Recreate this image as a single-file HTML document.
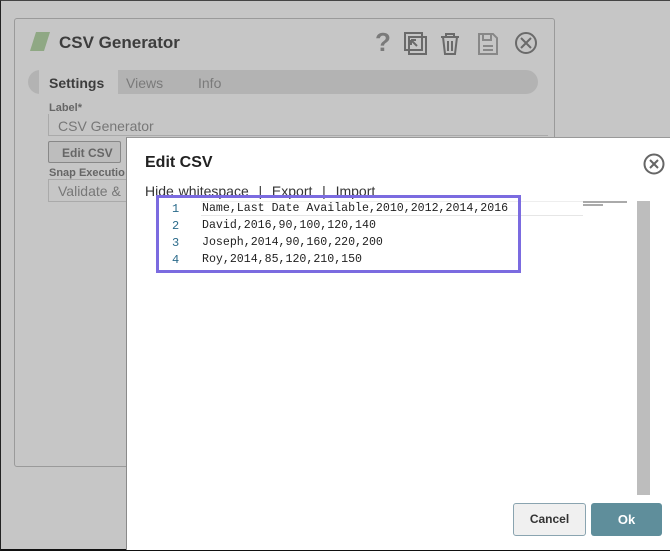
<!DOCTYPE html>
<html><head><style>
*{box-sizing:border-box;margin:0;padding:0}
body{width:670px;height:551px;background:#c6c6c6;position:relative;overflow:hidden;font-family:"Liberation Sans",sans-serif;border-left:1px solid #222;border-top:1px solid #444;border-bottom:2px solid #111}
.panel{position:absolute;left:13px;top:17px;width:541px;height:449px;border:1px solid #9a9a9a;border-radius:3px;background:#c6c6c6}
.t{position:absolute;color:#555}
.dlg{position:absolute;left:125px;top:136px;width:546px;height:413px;background:#fff;border-left:1px solid #8a8a8a;border-top:1px solid #999}
.mono{font-family:"Liberation Mono",monospace;font-size:11.6px;color:#222}
.ln{position:absolute;left:45px;color:#2a6a8a;font-family:"Liberation Mono",monospace;font-size:12px}
</style></head><body>
<div class="panel"></div>
<svg style="position:absolute;left:29px;top:31px" width="22" height="20"><polygon points="6,0 20,0 14,19 0,19" fill="#8fa884"/></svg>
<div class="t" style="left:58px;top:32px;font-size:17px;font-weight:bold;color:#3d3d3d">CSV Generator</div>
<div class="t" style="left:374px;top:26px;font-size:26px;font-weight:bold;color:#7a7a7a">?</div>
<svg style="position:absolute;left:402px;top:30px" width="140" height="26" fill="none" stroke="#6a6a6a" stroke-width="2">
<rect x="2" y="2" width="17" height="17"/><rect x="6" y="6" width="17" height="17"/><path d="M14 15 L8 9 M8 9h5 M8 9v5"/>
<path d="M38 6h18 M43 6v-3h8v3 M40 6l2 17h10l2-17 M45 10v10 M49 10v10"/>
<g stroke="#888"><path d="M76 3h14l4 4v16h-18z M80 3v6h8v-6 M80 15h10 M80 19h10"/></g>
<circle cx="123" cy="12" r="10"/><path d="M118 7l10 10 M128 7l-10 10"/>
</svg>
<div style="position:absolute;left:27px;top:69px;width:510px;height:24px;background:#b3b3b3;border-radius:12px"></div>
<div style="position:absolute;left:38px;top:69px;width:79px;height:24px;background:#c6c6c6"></div>
<div class="t" style="left:48px;top:74px;font-size:14px;font-weight:bold;color:#3d3d3d">Settings</div>
<div class="t" style="left:125px;top:74px;font-size:14px;color:#7a7a7a">Views</div>
<div class="t" style="left:197px;top:74px;font-size:14px;color:#7a7a7a">Info</div>
<div class="t" style="left:48px;top:101px;font-size:11px;font-weight:bold;color:#666">Label*</div>
<div style="position:absolute;left:47px;top:113px;width:500px;height:22px;border:1px solid #aaa;border-top:none;border-right:none"></div>
<div class="t" style="left:57px;top:117px;font-size:14px;color:#777">CSV Generator</div>
<div style="position:absolute;left:47px;top:140px;width:73px;height:22px;border:1px solid #888;background:#bdbdbd;border-radius:2px"></div>
<div class="t" style="left:61px;top:145px;font-size:12px;font-weight:bold;color:#666">Edit CSV</div>
<div class="t" style="left:48px;top:166px;font-size:11px;font-weight:bold;color:#666">Snap Executio</div>
<div style="position:absolute;left:47px;top:178px;width:80px;height:23px;border:1px solid #aaa;border-right:none"></div>
<div class="t" style="left:57px;top:182px;font-size:14px;color:#777">Validate &amp;</div>

<div class="dlg">
<div style="position:absolute;left:18px;top:16px;font-size:16px;font-weight:bold;color:#222">Edit CSV</div>
<svg style="position:absolute;left:516px;top:15px" width="22" height="22" fill="none" stroke="#666" stroke-width="2"><circle cx="11" cy="11" r="9.5"/><path d="M7 7l8 8 M15 7l-8 8"/></svg>
<div style="position:absolute;left:18px;top:45px;font-size:14px;color:#333;word-spacing:1px">Hide whitespace &nbsp;| &nbsp;Export &nbsp;| &nbsp;Import</div>
<div style="position:absolute;left:74px;top:63px;width:382px;height:15px;border-bottom:1px solid #e6e6e6;border-top:1px solid #eee;background:#fff"></div>
<div style="position:absolute;left:29px;top:57px;width:365px;height:78px;border:3px solid #7b6be0"></div>
<div class="ln" style="top:64px">1</div><div class="mono" style="position:absolute;left:75px;top:64px">Name,Last Date Available,2010,2012,2014,2016</div>
<div class="ln" style="top:81px">2</div><div class="mono" style="position:absolute;left:75px;top:81px">David,2016,90,100,120,140</div>
<div class="ln" style="top:98px">3</div><div class="mono" style="position:absolute;left:75px;top:98px">Joseph,2014,90,160,220,200</div>
<div class="ln" style="top:115px">4</div><div class="mono" style="position:absolute;left:75px;top:115px">Roy,2014,85,120,210,150</div>
<div style="position:absolute;left:456px;top:63px;width:44px;height:2px;background:#aaa"></div>
<div style="position:absolute;left:456px;top:66px;width:20px;height:2px;background:#aaa"></div>
<div style="position:absolute;left:510px;top:63px;width:13px;height:294px;background:#bdbdbd"></div>
<div style="position:absolute;left:386px;top:365px;width:73px;height:33px;border:1px solid #8aa4b0;border-radius:3px;background:#f0f0f0;font-size:12px;font-weight:bold;color:#333;text-align:center;line-height:31px">Cancel</div>
<div style="position:absolute;left:464px;top:365px;width:71px;height:33px;border-radius:3px;background:#5f8e9b;font-size:13px;font-weight:bold;color:#fff;text-align:center;line-height:33px">Ok</div>
</div>
</body></html>
